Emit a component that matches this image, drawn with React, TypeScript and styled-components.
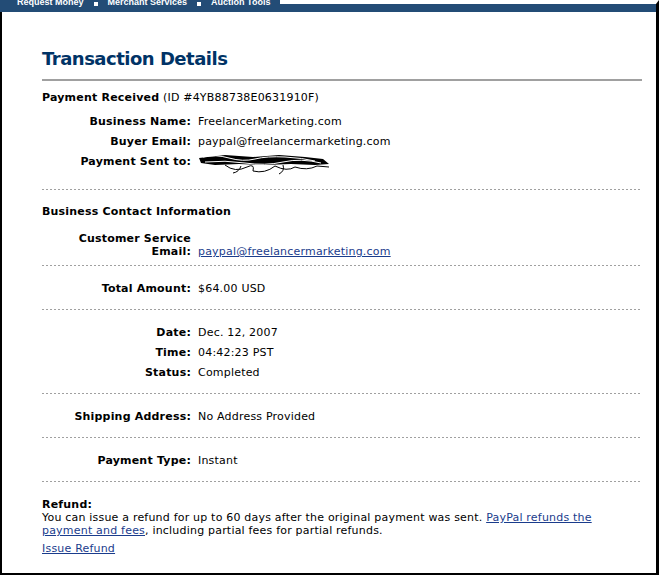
import React from 'react';
import styled, { createGlobalStyle } from 'styled-components';

const GlobalStyle = createGlobalStyle`
  html, body {
    margin: 0;
    padding: 0;
    background: #ffffff;
  }
`;

const tabs = ['Request Money', 'Merchant Services', 'Auction Tools'];

const Scribble = () => (
  <svg width="140" height="22" viewBox="0 0 140 22">
    <path
      d="M4 5 L30 2 L58 4 L84 2 L110 4 L128 6 L134 11 L120 12 L96 11 L70 12 L44 11 L20 12 L6 10 Z"
      fill="#000"
    />
    <path d="M8 4 Q20 1 34 5 T60 6 T90 4 T120 8" stroke="#fff" strokeWidth="1" fill="none" />
    <path d="M10 9 Q30 7 50 10 T88 9 T126 10" stroke="#fff" strokeWidth="1" fill="none" />
    <path
      d="M30 12 Q40 20 52 14 Q60 10 58 18 Q70 21 80 13 Q92 19 100 14 Q112 18 122 13 L134 14"
      stroke="#000"
      strokeWidth="1"
      fill="none"
    />
    <path d="M46 13 Q44 19 38 20" stroke="#000" strokeWidth="1" fill="none" />
    <path d="M88 12 Q90 18 84 21" stroke="#000" strokeWidth="1" fill="none" />
  </svg>
);

const App = () => {
  return (
    <StPage>
      <GlobalStyle />
      <StNavBar>
        <StTabs>
          {tabs.map((tab, i) => (
            <React.Fragment key={tab}>
              {i > 0 && <StBullet />}
              <StTab>{tab}</StTab>
            </React.Fragment>
          ))}
        </StTabs>
        <StNavFill />
      </StNavBar>
      <StFrame>
        <StContent>
          <StTitle>Transaction Details</StTitle>
          <StRule />

          <StHead>
            <b>Payment Received</b> (ID #4YB88738E0631910F)
          </StHead>
          <StRows $top={4}>
            <StLabel>Business Name:</StLabel>
            <StValue>FreelancerMarketing.com</StValue>
            <StLabel>Buyer Email:</StLabel>
            <StValue>paypal@freelancermarketing.com</StValue>
            <StLabel>Payment Sent to:</StLabel>
            <StValue>
              <StScribbleWrap>
                <Scribble />
              </StScribbleWrap>
            </StValue>
          </StRows>
          <StDots $top={16} />

          <StSection $top={12} $bottom={7}>
            <StHead>
              <b>Business Contact Information</b>
            </StHead>
            <StRows $top={10} $line={13}>
              <StLabel>
                Customer Service
                <br />
                Email:
              </StLabel>
              <StValue $bottom>
                <StLink href="#">paypal@freelancermarketing.com</StLink>
              </StValue>
            </StRows>
          </StSection>
          <StDots />

          <StSection>
            <StRows>
              <StLabel>Total Amount:</StLabel>
              <StValue>$64.00 USD</StValue>
            </StRows>
          </StSection>
          <StDots />

          <StSection $top={13} $bottom={10}>
            <StRows>
              <StLabel>Date:</StLabel>
              <StValue>Dec. 12, 2007</StValue>
              <StLabel>Time:</StLabel>
              <StValue>04:42:23 PST</StValue>
              <StLabel>Status:</StLabel>
              <StValue>Completed</StValue>
            </StRows>
          </StSection>
          <StDots />

          <StSection>
            <StRows>
              <StLabel>Shipping Address:</StLabel>
              <StValue>No Address Provided</StValue>
            </StRows>
          </StSection>
          <StDots />

          <StSection>
            <StRows>
              <StLabel>Payment Type:</StLabel>
              <StValue>Instant</StValue>
            </StRows>
          </StSection>
          <StDots />

          <StRefund>
            <b>Refund:</b>
            <p>
              You can issue a refund for up to 60 days after the original payment was sent.{' '}
              <StLink href="#">
                PayPal refunds the
                <br />
                payment and fees
              </StLink>
              , including partial fees for partial refunds.
            </p>
            <StLink href="#">Issue Refund</StLink>
          </StRefund>
        </StContent>
      </StFrame>
    </StPage>
  );
};

export default App;

const StPage = styled.div`
  display: flex;
  flex-direction: column;

  width: 659px;
  height: 575px;
  overflow: hidden;

  font-family: 'DejaVu Sans', Verdana, sans-serif;
  font-size: 11px;
  letter-spacing: 0.2px;
  color: #000000;
`;

const StNavBar = styled.div`
  display: flex;
  height: 12px;
  background: #234c76;
`;

const StTabs = styled.div`
  display: flex;
  align-items: flex-start;
  gap: 10px;

  width: 263px;
  height: 12px;
  padding-left: 17px;
  overflow: hidden;
`;

const StTab = styled.span`
  margin-top: -2px;

  font-family: 'Liberation Sans', Arial, sans-serif;
  font-weight: 700;
  font-size: 9px;
  line-height: 9px;
  letter-spacing: 0;
  color: #ffffff;
  white-space: nowrap;
`;

const StBullet = styled.span`
  width: 4px;
  height: 4px;
  margin-top: 2px;
  background: #ffffff;
`;

const StNavFill = styled.div`
  flex: 1;
  border-top: 4px solid #ffffff;
  border-right: 3px solid #000000;
`;

const StFrame = styled.div`
  flex: 1;

  padding: 0 14px 0 40px;
  border-left: 2px solid #000000;
  border-right: 3px solid #000000;
  border-bottom: 2px solid #000000;
`;

const StContent = styled.div`
  display: flex;
  flex-direction: column;
  width: 600px;
`;

const StTitle = styled.h1`
  margin: 36px 0 0;

  font-size: 18px;
  line-height: 22px;
  font-weight: 700;
  letter-spacing: -0.5px;
  color: #003366;
`;

const StRule = styled.div`
  height: 2px;
  margin-top: 9px;
  background: #a0a0a0;
`;

const StHead = styled.div`
  margin-top: 7px;
  line-height: 20px;

  & > b {
    font-weight: 700;
  }
`;

const StRows = styled.div<{ $top?: number; $line?: number }>`
  display: grid;
  grid-template-columns: 149px 1fr;
  column-gap: 7px;

  margin-top: ${({ $top }) => $top ?? 0}px;
  line-height: ${({ $line }) => $line ?? 20}px;
`;

const StLabel = styled.div`
  font-weight: 700;
  text-align: right;
  white-space: nowrap;
`;

const StValue = styled.div<{ $bottom?: boolean }>`
  display: flex;
  align-items: ${({ $bottom }) => ($bottom ? 'flex-end' : 'center')};
  white-space: nowrap;
`;

const StScribbleWrap = styled.span`
  display: block;
  height: 20px;
  margin-left: -3px;
  padding-top: 1px;
`;

const StDots = styled.div<{ $top?: number }>`
  height: 1px;
  margin-top: ${({ $top }) => $top ?? 0}px;
  background-image: linear-gradient(to right, #a0a0a0 2px, transparent 2px);
  background-size: 4px 1px;
`;

const StSection = styled.section<{ $top?: number; $bottom?: number }>`
  padding-top: ${({ $top }) => $top ?? 13}px;
  padding-bottom: ${({ $bottom }) => $bottom ?? 10}px;

  & > ${StHead} {
    margin-top: 0;
  }
`;

const StLink = styled.a`
  color: #1a3c8c;
  text-decoration: underline;
`;

const StRefund = styled.div`
  display: flex;
  flex-direction: column;
  align-items: flex-start;

  padding-top: 16px;
  line-height: 13px;

  & > p {
    margin: 0 0 5px;
  }
`;
